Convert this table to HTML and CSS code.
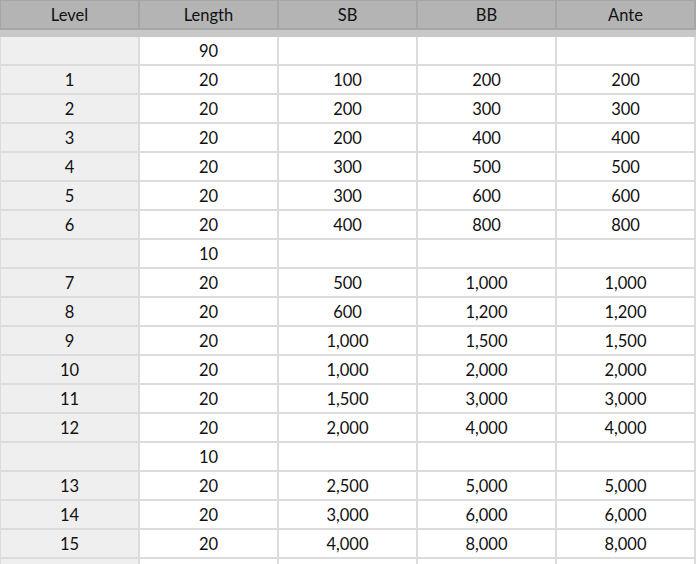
FILE: index.html
```html
<!DOCTYPE html>
<html>
<head>
<meta charset="utf-8">
<link rel="stylesheet" href="styles.css">
</head>
<body>
<div class="sheet">
  <div class="head">
    <div class="hc">Level</div><div class="hc">Length</div><div class="hc">SB</div><div class="hc">BB</div><div class="hc">Ante</div>
  </div>
  <div class="band"></div>
  <div class="body">
    <div class="c lv"></div><div class="c">90</div><div class="c"></div><div class="c"></div><div class="c"></div>
    <div class="c lv">1</div><div class="c">20</div><div class="c">100</div><div class="c">200</div><div class="c">200</div>
    <div class="c lv">2</div><div class="c">20</div><div class="c">200</div><div class="c">300</div><div class="c">300</div>
    <div class="c lv">3</div><div class="c">20</div><div class="c">200</div><div class="c">400</div><div class="c">400</div>
    <div class="c lv">4</div><div class="c">20</div><div class="c">300</div><div class="c">500</div><div class="c">500</div>
    <div class="c lv">5</div><div class="c">20</div><div class="c">300</div><div class="c">600</div><div class="c">600</div>
    <div class="c lv">6</div><div class="c">20</div><div class="c">400</div><div class="c">800</div><div class="c">800</div>
    <div class="c lv"></div><div class="c">10</div><div class="c"></div><div class="c"></div><div class="c"></div>
    <div class="c lv">7</div><div class="c">20</div><div class="c">500</div><div class="c">1,000</div><div class="c">1,000</div>
    <div class="c lv">8</div><div class="c">20</div><div class="c">600</div><div class="c">1,200</div><div class="c">1,200</div>
    <div class="c lv">9</div><div class="c">20</div><div class="c">1,000</div><div class="c">1,500</div><div class="c">1,500</div>
    <div class="c lv">10</div><div class="c">20</div><div class="c">1,000</div><div class="c">2,000</div><div class="c">2,000</div>
    <div class="c lv">11</div><div class="c">20</div><div class="c">1,500</div><div class="c">3,000</div><div class="c">3,000</div>
    <div class="c lv">12</div><div class="c">20</div><div class="c">2,000</div><div class="c">4,000</div><div class="c">4,000</div>
    <div class="c lv"></div><div class="c">10</div><div class="c"></div><div class="c"></div><div class="c"></div>
    <div class="c lv">13</div><div class="c">20</div><div class="c">2,500</div><div class="c">5,000</div><div class="c">5,000</div>
    <div class="c lv">14</div><div class="c">20</div><div class="c">3,000</div><div class="c">6,000</div><div class="c">6,000</div>
    <div class="c lv">15</div><div class="c">20</div><div class="c">4,000</div><div class="c">8,000</div><div class="c">8,000</div>
    <div class="c lv"></div><div class="c"></div><div class="c"></div><div class="c"></div><div class="c"></div>
  </div>
</div>
</body>
</html>
```
FILE: styles.css
```css
html, body {
  margin: 0;
  padding: 0;
  background: #ffffff;
}
body {
  font-family: "Lato", "Open Sans", sans-serif;
  font-size: 16.5px;
  color: #111111;
  overflow: hidden;
}
.sheet {
  width: 696px;
}
.head {
  display: grid;
  grid-template-columns: repeat(5, 137px);
  column-gap: 2px;
  padding: 1px 2px 2px 1px;
  background: #a6a6a6;
}
.hc {
  height: 27px;
  box-sizing: border-box;
  padding-top: 2px;
  background: #b4b4b4;
  display: flex;
  align-items: center;
  justify-content: center;
  line-height: 1;
}
.band {
  height: 7px;
  background: #c8c8c8;
}
.body {
  display: grid;
  grid-template-columns: repeat(5, 137px);
  grid-auto-rows: 27px;
  gap: 2px;
  padding: 0 2px 0 1px;
  background: #dcdcdc;
}
.c {
  box-sizing: border-box;
  padding-top: 2px;
  background: #ffffff;
  display: flex;
  align-items: center;
  justify-content: center;
  line-height: 1;
}
.lv {
  background: #efefef;
}
```
